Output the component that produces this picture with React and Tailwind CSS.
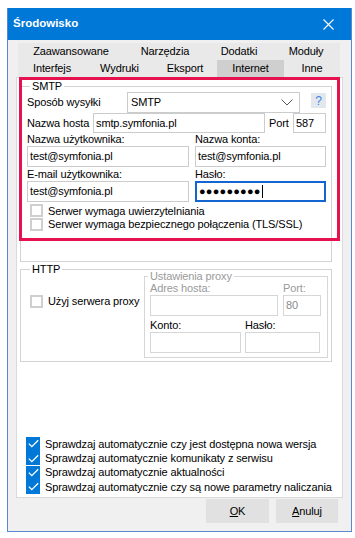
import React from 'react';

const tabsTop = [
  { label: 'Zaawansowane', w: 'w-[106px]' },
  { label: 'Narzędzia', w: 'w-[82px]' },
  { label: 'Dodatki', w: 'w-[66px]' },
  { label: 'Moduły', w: 'w-[68px]' },
];

const tabsBottom = [
  { label: 'Interfejs', w: 'w-[68px]' },
  { label: 'Wydruki', w: 'w-[67px]' },
  { label: 'Eksport', w: 'w-[64px]' },
  { label: 'Internet', w: 'w-[67px]', active: true },
  { label: 'Inne', w: 'w-[56px]' },
];

const updates = [
  'Sprawdzaj automatycznie czy jest dostępna nowa wersja',
  'Sprawdzaj automatycznie komunikaty z serwisu',
  'Sprawdzaj automatycznie aktualności',
  'Sprawdzaj automatycznie czy są nowe parametry naliczania',
];

function Box() {
  return <span className="h-[13px] w-[13px] shrink-0 border-2 border-[#cfcfcf] bg-white" />;
}

function Checked() {
  return (
    <span className="flex h-[14px] w-[14px] shrink-0 items-center justify-center bg-[#0078d7]">
      <svg width="11" height="9" viewBox="0 0 11 9">
        <polyline points="0.8,4.6 3.8,7.6 10.2,1.2" fill="none" stroke="#fff" strokeWidth="1.3" />
      </svg>
    </span>
  );
}

function Field({ children, className = '' }) {
  return (
    <div className={`flex items-center border border-[#cccccc] bg-white pl-[2px] ${className}`}>{children}</div>
  );
}

export default function App() {
  return (
    <div className="h-[538px] w-[355px] overflow-hidden bg-white pt-[8px] pl-[7px] font-['Liberation_Sans',Arial,sans-serif] text-[11px] tracking-[-0.12px] text-black">
      <div className="flex h-[524px] w-[345px] flex-col border-x border-b border-[#5b87cc] bg-[#f0f0f0]">
        {/* title bar */}
        <div className="flex h-[32px] shrink-0 items-center justify-between bg-[#0078d7] pl-[5px] pr-[17px] text-white">
          <span className="text-[11.5px] font-bold tracking-normal">Środowisko</span>
          <svg width="11" height="11" viewBox="0 0 11 11">
            <path d="M0.5 0.5 L10.5 10.5 M10.5 0.5 L0.5 10.5" stroke="#fff" strokeWidth="1.1" />
          </svg>
        </div>

        <div className="flex flex-1 flex-col px-[8px] pt-[3px]">
          {/* tabs */}
          <div className="ml-[2px] w-[322px] bg-[#e9e9e9]">
            <div className="flex h-[17px]">
              {tabsTop.map((t) => (
                <div key={t.label} className={`${t.w} flex items-center justify-center`}>{t.label}</div>
              ))}
            </div>
            <div className="flex h-[17px]">
              {tabsBottom.map((t) => (
                <div
                  key={t.label}
                  className={`${t.w} flex items-center justify-center ${t.active ? 'bg-[#cfcfcf]' : ''}`}
                >
                  {t.label}
                </div>
              ))}
            </div>
          </div>

          {/* panel */}
          <div className="relative flex h-[421px] w-[327px] flex-col border border-[#d9d9d9] bg-white">
            {/* SMTP */}
            <fieldset className="ml-[3px] mt-[2px] w-[312px] border border-[#d3d3d3] pb-[30px] pl-[6px]">
              <legend className="ml-[3px] px-[2px] leading-[12px]">SMTP</legend>
              <div className="flex h-[21px] items-start">
                <span className="w-[100px] leading-[21px]">Sposób wysyłki</span>
                <div className="flex h-[21px] w-[173px] items-center justify-between border border-[#cccccc] bg-white pl-[3px] pr-[6px]">
                  <span>SMTP</span>
                  <svg width="12" height="7" viewBox="0 0 12 7">
                    <polyline points="0.5,0.5 6,6 11.5,0.5" fill="none" stroke="#5a5a5a" strokeWidth="1" />
                  </svg>
                </div>
                <div className="ml-[11px] mt-[1px] flex h-[15px] w-[15px] items-center justify-center bg-[#e3e8ee] text-[12px] text-[#3f82da]">
                  ?
                </div>
              </div>
              <div className="flex h-[20px] items-center">
                <span className="w-[66px]">Nazwa hosta</span>
                <Field className="h-[20px] w-[172px]">smtp.symfonia.pl</Field>
                <span className="w-[28px] pl-[4px]">Port</span>
                <Field className="h-[20px] w-[33px]">587</Field>
              </div>
              <div className="grid grid-cols-[162px_131px] gap-x-[6px]">
                <div className="h-[13px] leading-[13px]">Nazwa użytkownika:</div>
                <div className="h-[13px] leading-[13px]">Nazwa konta:</div>
                <Field className="h-[21px]">test@symfonia.pl</Field>
                <Field className="h-[21px]">test@symfonia.pl</Field>
                <div className="h-[14px] leading-[14px]">E-mail użytkownika:</div>
                <div className="h-[14px] leading-[14px]">Hasło:</div>
                <Field className="h-[21px]">test@symfonia.pl</Field>
                <div className="flex h-[21px] items-center border-2 border-[#1565d0] bg-white pl-[2px]">
                  <span className="text-[11px] tracking-[0.2px]">●●●●●●●●●</span>
                  <span className="ml-[1px] h-[13px] w-px bg-black" />
                </div>
              </div>
              <div className="mt-[2px] flex flex-col">
                <div className="flex h-[13.5px] items-center gap-[5px] pl-[3px]">
                  <Box />
                  <span>Serwer wymaga uwierzytelniania</span>
                </div>
                <div className="flex h-[13.5px] items-center gap-[5px] pl-[3px]">
                  <Box />
                  <span>Serwer wymaga bezpiecznego połączenia (TLS/SSL)</span>
                </div>
              </div>
            </fieldset>

            {/* HTTP */}
            <fieldset className="ml-[3px] mt-[1px] w-[312px] border border-[#d3d3d3] pb-[3px] pl-[9px]">
              <legend className="px-[2px] leading-[12px]">HTTP</legend>
              <div className="flex items-start">
                <div className="mt-[20px] flex h-[13px] w-[114px] items-center gap-[5px]">
                  <Box />
                  <span>Użyj serwera proxy</span>
                </div>
                <fieldset className="-mt-[5px] w-[184px] border border-[#d6d6d6] pb-[4px] pl-[5px]">
                  <legend className="-ml-[2px] px-[2px] leading-[12px] text-[#9a9a9a]">Ustawienia proxy</legend>
                  <div className="grid grid-cols-[128px_38px] gap-x-[5px]">
                    <div className="h-[13px] leading-[13px] text-[#9a9a9a]">Adres hosta:</div>
                    <div className="h-[13px] leading-[13px] text-[#9a9a9a]">Port:</div>
                    <div className="h-[21px] border border-[#d6d6d6] bg-white" />
                    <div className="flex h-[21px] items-center border border-[#d6d6d6] bg-white pl-[2px] text-[#8a8a8a]">80</div>
                  </div>
                  <div className="mt-[3px] grid grid-cols-[91px_75px] gap-x-[4px]">
                    <div className="h-[13px] leading-[13px]">Konto:</div>
                    <div className="h-[13px] leading-[13px]">Hasło:</div>
                    <div className="h-[21px] border border-[#d6d6d6] bg-white" />
                    <div className="h-[21px] border border-[#d6d6d6] bg-white" />
                  </div>
                </fieldset>
              </div>
            </fieldset>

            {/* updates */}
            <div className="mt-auto flex flex-col pb-[3px] pl-[9px]">
              {updates.map((u) => (
                <div key={u} className="flex h-[14.33px] items-center gap-[5px]">
                  <Checked />
                  <span>{u}</span>
                </div>
              ))}
            </div>

            {/* highlight */}
            <div className="pointer-events-none absolute left-[2px] top-[-1px] h-[164px] w-[321px] border-[3px] border-[#e5124f]" />
          </div>

          {/* buttons */}
          <div className="mt-[1px] flex justify-end gap-[7px] pr-[5px]">
            <div className="flex h-[24px] w-[63px] items-center justify-center bg-[#e1e1e1]">
              <span><span className="underline">O</span>K</span>
            </div>
            <div className="flex h-[24px] w-[62px] items-center justify-center bg-[#e1e1e1]">
              <span><span className="underline">A</span>nuluj</span>
            </div>
          </div>
        </div>
      </div>
    </div>
  );
}
